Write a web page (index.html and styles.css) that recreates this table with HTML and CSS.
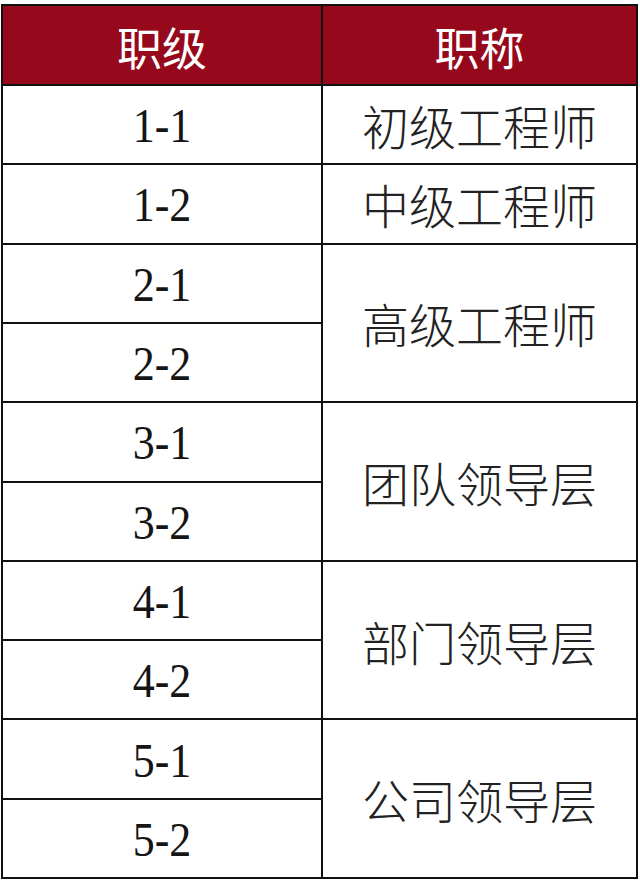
FILE: index.html
```html
<!DOCTYPE html>
<html lang="zh-CN">
<head>
<meta charset="utf-8">
<title>职级与职称</title>
<link rel="stylesheet" href="styles.css">
</head>
<body>
<div class="table">
  <div class="th">职级</div><div class="th">职称</div>
  <div class="lv"><span>1-1</span></div><div class="tt">初级工程师</div>
  <div class="lv"><span>1-2</span></div><div class="tt">中级工程师</div>
  <div class="lv"><span>2-1</span></div><div class="tt span2">高级工程师</div>
  <div class="lv"><span>2-2</span></div>
  <div class="lv"><span>3-1</span></div><div class="tt span2">团队领导层</div>
  <div class="lv"><span>3-2</span></div>
  <div class="lv"><span>4-1</span></div><div class="tt span2">部门领导层</div>
  <div class="lv"><span>4-2</span></div>
  <div class="lv"><span>5-1</span></div><div class="tt span2">公司领导层</div>
  <div class="lv"><span>5-2</span></div>
</div>
</body>
</html>
```
FILE: styles.css
```css
html, body {
  margin: 0;
  background: #ffffff;
}
body {
  padding: 4px 2px 1px 1px;
}
.table {
  width: 637px;
  height: 875px;
  box-sizing: border-box;
  display: grid;
  grid-template-columns: 318px 313px;
  grid-template-rows: 78px repeat(10, 1fr);
  gap: 2px;
  padding: 2px;
  background: #111111;
}
.table > div {
  display: flex;
  align-items: center;
  justify-content: center;
  background: #ffffff;
}
.th {
  background: #96081b !important;
  color: #ffffff;
  font-family: "Noto Sans CJK SC", sans-serif;
  font-size: 45px;
  padding-top: 2px;
}
.lv {
  grid-column: 1;
  font-family: "Liberation Serif", serif;
  font-size: 44px;
  color: #151515;
  padding-top: 2px;
}
.lv span {
  display: inline-block;
  transform: scaleY(1.12);
}
.tt {
  grid-column: 2;
  font-family: "Noto Sans CJK SC", sans-serif;
  font-weight: 300;
  font-size: 47px;
  color: #222222;
}
.span2 {
  grid-row: span 2;
}
```
